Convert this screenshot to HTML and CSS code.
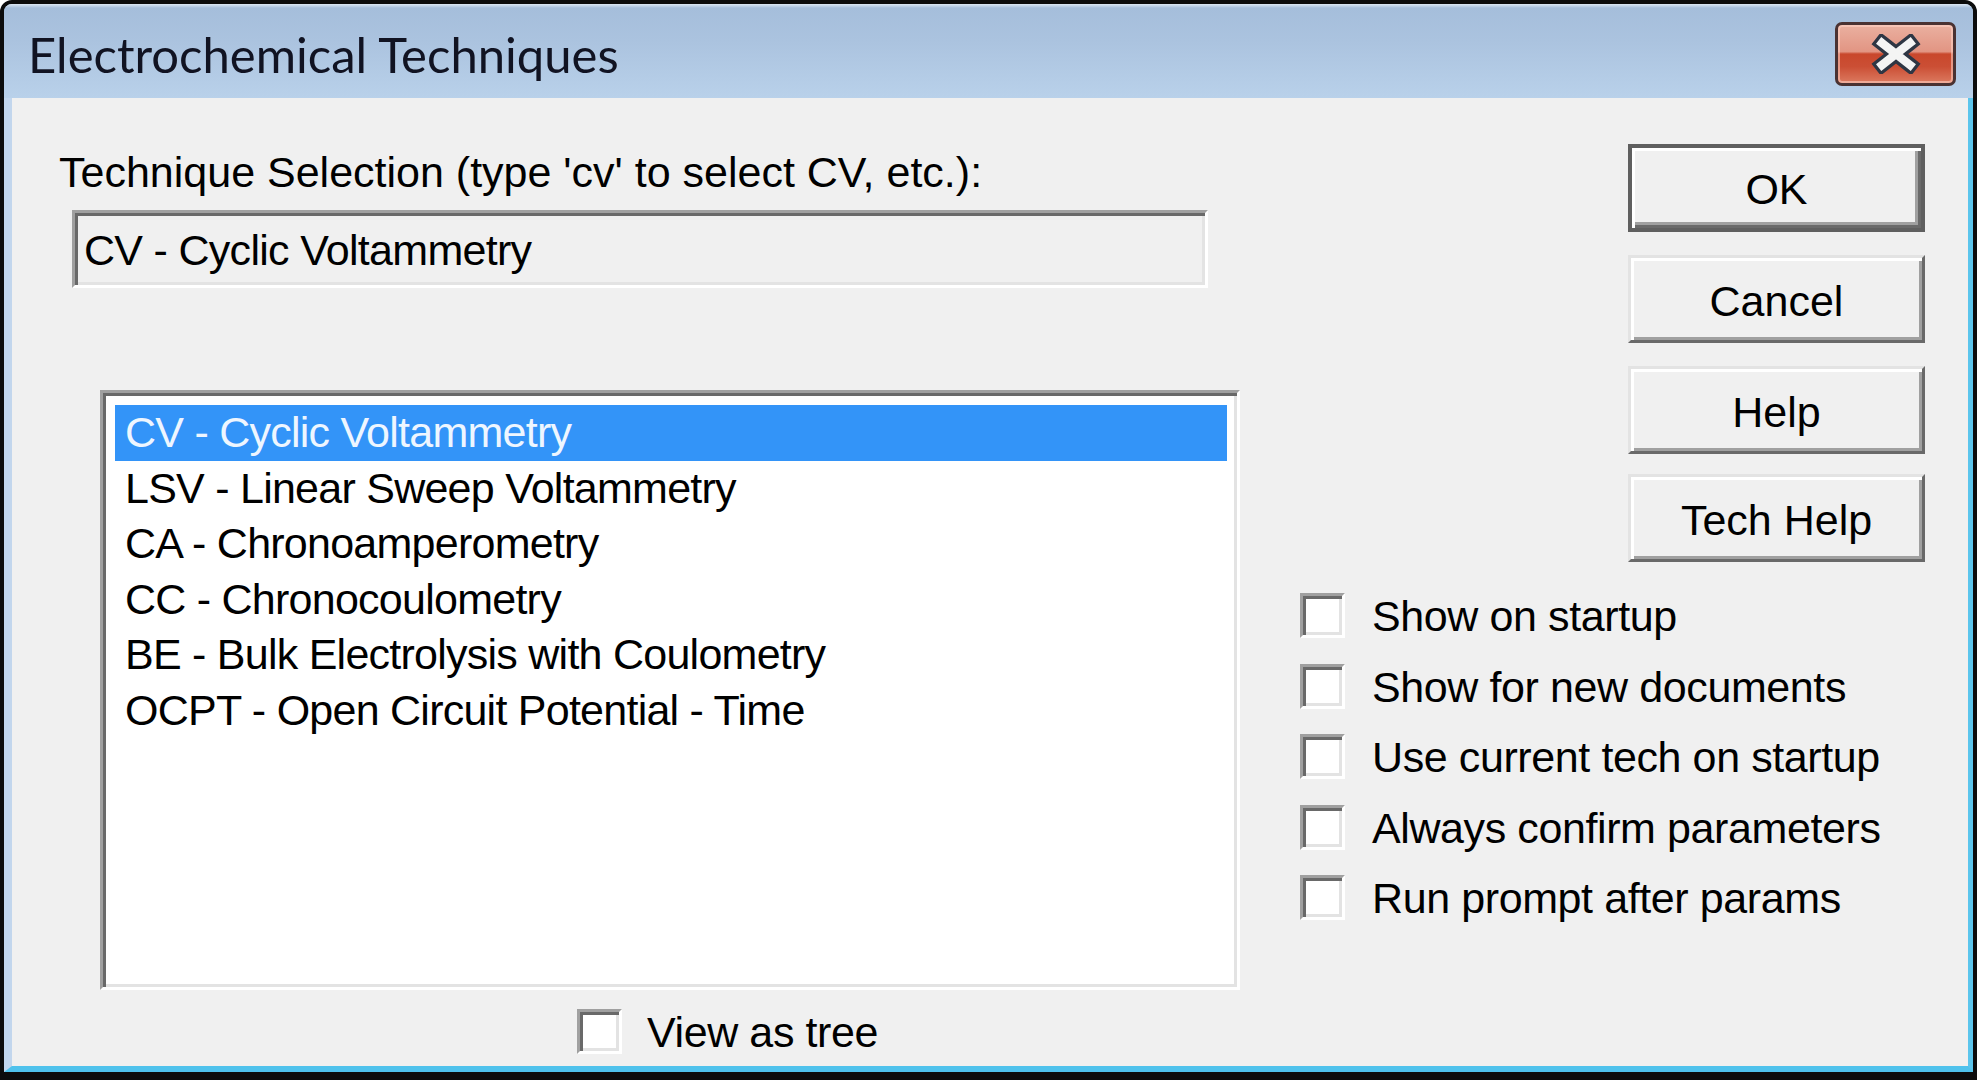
FILE: index.html
```html
<!DOCTYPE html>
<html lang="en">
<head>
<meta charset="utf-8">
<title>Electrochemical Techniques</title>
<link rel="stylesheet" href="styles.css">
</head>
<body>
<div class="window">
  <div class="titlebar">
    <span class="title">Electrochemical Techniques</span>
    <button class="close" aria-label="Close">
      <svg width="50" height="40" viewBox="0 0 50 40">
        <path d="M11 9 L39 31 M39 9 L11 31" stroke="#2e3644" stroke-width="15" stroke-linecap="square" fill="none"/>
        <path d="M11 9 L39 31 M39 9 L11 31" stroke="#f4f4f4" stroke-width="8.5" stroke-linecap="square" fill="none"/>
      </svg>
    </button>
  </div>
  <div class="frame">
    <div class="client">
      <div class="main">
        <div class="label">Technique Selection (type 'cv' to select CV, etc.):</div>
        <div class="field">CV - Cyclic Voltammetry</div>
        <ul class="list">
          <li class="item selected">CV - Cyclic Voltammetry</li>
          <li class="item">LSV - Linear Sweep Voltammetry</li>
          <li class="item">CA - Chronoamperometry</li>
          <li class="item">CC - Chronocoulometry</li>
          <li class="item">BE - Bulk Electrolysis with Coulometry</li>
          <li class="item">OCPT - Open Circuit Potential - Time</li>
        </ul>
        <div class="check tree"><span class="box"></span><span class="check-text">View as tree</span></div>
      </div>
      <div class="side">
        <div class="buttons">
          <button class="btn default">OK</button>
          <button class="btn">Cancel</button>
          <button class="btn">Help</button>
          <button class="btn last">Tech Help</button>
        </div>
        <div class="options">
          <div class="check"><span class="box"></span><span class="check-text">Show on startup</span></div>
          <div class="check"><span class="box"></span><span class="check-text">Show for new documents</span></div>
          <div class="check"><span class="box"></span><span class="check-text">Use current tech on startup</span></div>
          <div class="check"><span class="box"></span><span class="check-text">Always confirm parameters</span></div>
          <div class="check"><span class="box"></span><span class="check-text">Run prompt after params</span></div>
        </div>
      </div>
    </div>
  </div>
</div>
</body>
</html>
```

FILE: styles.css
```css
html, body {
  margin: 0;
  padding: 0;
  background: #ffffff;
}

body {
  width: 1977px;
  height: 1080px;
  overflow: hidden;
  font-family: "Liberation Sans", Arial, sans-serif;
  font-size: 43px;
  color: #000;
}

.window {
  box-sizing: border-box;
  width: 1977px;
  height: 1080px;
  border: 4px solid #0c0c0c;
  border-bottom-width: 8px;
  border-radius: 12px 12px 0 0;
  display: flex;
  flex-direction: column;
  background: #b9d1ea;
  overflow: hidden;
}

.titlebar {
  flex: 0 0 94px;
  display: flex;
  align-items: flex-start;
  padding-left: 24px;
  background: linear-gradient(#dce7f3 0px, #a5bedb 4px, #abc3df 40%, #b9d1ea 100%);
}

.title {
  font-family: Lato, "Noto Sans", sans-serif;
  font-size: 49px;
  line-height: 60px;
  margin-top: 20px;
  color: #111322;
  white-space: nowrap;
}

.close {
  box-sizing: border-box;
  margin: 18px 17px 0 auto;
  width: 121px;
  height: 64px;
  padding: 0;
  border: 3px solid #4a3232;
  border-radius: 7px;
  background: linear-gradient(#eab0a0 0%, #e29583 46%, #c9472c 50%, #cb4f35 72%, #dc7a60 100%);
  box-shadow: inset 0 0 0 2px rgba(255, 214, 200, 0.55);
  display: flex;
  align-items: center;
  justify-content: center;
}

.frame {
  flex: 1;
  display: flex;
  border-left: 8px solid #c2d6ed;
  border-right: 5px solid #5cc5ec;
  border-bottom: 6px solid #4fc2ec;
}

.client {
  flex: 1;
  display: flex;
  background: #f0f0f0;
  padding-left: 47px;
}

.main {
  width: 1181px;
  padding-top: 49px;
}

.label {
  line-height: 50px;
  white-space: nowrap;
}

.field {
  box-sizing: border-box;
  margin: 13px 0 0 13px;
  width: 1136px;
  height: 78px;
  padding: 12px 0 0 9px;
  line-height: 50px;
  letter-spacing: -0.7px;
  white-space: nowrap;
  background: #f0f0f0;
  border: 3px solid;
  border-color: #a0a0a0 #ffffff #ffffff #a0a0a0;
  box-shadow: inset 3px 3px 0 #696969, inset -3px -3px 0 #e3e3e3;
}

.list {
  box-sizing: border-box;
  list-style: none;
  margin: 102px 0 0 41px;
  width: 1140px;
  height: 600px;
  padding: 12px 10px 9px 12px;
  background: #ffffff;
  border: 3px solid;
  border-color: #a0a0a0 #ffffff #ffffff #a0a0a0;
  box-shadow: inset 3px 3px 0 #696969, inset -3px -3px 0 #e3e3e3;
}

.item {
  height: 55.5px;
  line-height: 55.5px;
  padding-left: 10px;
  letter-spacing: -0.75px;
  white-space: nowrap;
}

.item.selected {
  background: #3394f8;
  color: #eef6ff;
}

.check {
  display: flex;
  align-items: flex-start;
  height: 45px;
}

.box {
  box-sizing: border-box;
  flex: 0 0 45px;
  width: 45px;
  height: 45px;
  background: #ffffff;
  border: 3px solid;
  border-color: #a0a0a0 #ffffff #ffffff #a0a0a0;
  box-shadow: inset 3px 3px 0 #696969, inset -3px -3px 0 #e3e3e3;
}

.check-text {
  margin-left: 27px;
  margin-top: -2px;
  line-height: 50px;
  letter-spacing: -0.4px;
  white-space: nowrap;
}

.tree {
  margin: 19px 0 0 518px;
}

.tree .check-text {
  margin-left: 25px;
}

.side {
  margin-left: 60px;
  padding-top: 46px;
}

.buttons {
  display: flex;
  flex-direction: column;
  margin-left: 328px;
  width: 297px;
}

.btn {
  box-sizing: border-box;
  width: 297px;
  height: 88px;
  margin: 0 0 23px 0;
  padding: 3px 0 0 0;
  font: inherit;
  line-height: 50px;
  color: #000;
  text-align: center;
  background: #f0f0f0;
  border: 3px solid;
  border-color: #e3e3e3 #696969 #696969 #e3e3e3;
  box-shadow: inset 3px 3px 0 #ffffff, inset -3px -3px 0 #a0a0a0;
  display: block;
}

.btn:nth-child(3) {
  margin-bottom: 20px;
}

.btn.last {
  margin-bottom: 0;
}

.btn.default {
  border: 4px solid #5f5f5f;
  padding-top: 2px;
  box-shadow: inset 3px 3px 0 #ffffff, inset -3px -3px 0 #6a6a6a, inset -6px -6px 0 #a0a0a0;
}

.options {
  margin-top: 31px;
  display: flex;
  flex-direction: column;
  gap: 25.5px;
}
```
